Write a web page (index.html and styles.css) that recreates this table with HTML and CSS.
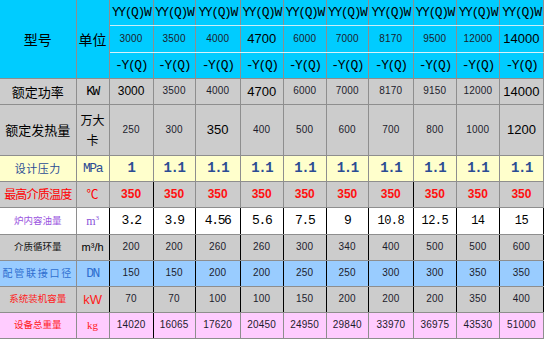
FILE: index.html
```html
<!DOCTYPE html>
<html lang="zh">
<head>
<meta charset="utf-8">
<title>型号参数表</title>
<link rel="stylesheet" href="styles.css">
</head>
<body>
<table class="spec">
<colgroup>
<col class="c-name"><col class="c-unit">
<col class="c44"><col class="c42"><col class="c45"><col class="c43"><col class="c43"><col class="c42"><col class="c45"><col class="c43"><col class="c43"><col class="c44">
</colgroup>
<tbody>
<tr class="h1 hd">
<td rowspan="3" class="lab lab-big">型号</td>
<td rowspan="3" class="lab lab-big">单位</td>
<td class="mono">YY(Q)W</td><td class="mono">YY(Q)W</td><td class="mono">YY(Q)W</td><td class="mono">YY(Q)W</td><td class="mono">YY(Q)W</td><td class="mono">YY(Q)W</td><td class="mono">YY(Q)W</td><td class="mono">YY(Q)W</td><td class="mono">YY(Q)W</td><td class="mono">YY(Q)W</td>
</tr>
<tr class="h2 hd">
<td class="sm">3000</td><td class="sm">3500</td><td class="sm">4000</td><td class="lg">4700</td><td class="sm">6000</td><td class="sm">7000</td><td class="sm">8170</td><td class="sm">9500</td><td class="sm">12000</td><td class="lg">14000</td>
</tr>
<tr class="h3 hd">
<td class="mono">-Y(Q)</td><td class="mono">-Y(Q)</td><td class="mono">-Y(Q)</td><td class="mono">-Y(Q)</td><td class="mono">-Y(Q)</td><td class="mono">-Y(Q)</td><td class="mono">-Y(Q)</td><td class="mono">-Y(Q)</td><td class="mono">-Y(Q)</td><td class="mono">-Y(Q)</td>
</tr>
<tr class="r26 gray">
<td class="lab">额定功率</td><td class="mono">KW</td>
<td class="md">3000</td><td class="sm">3500</td><td class="sm">4000</td><td class="lg">4700</td><td class="sm">6000</td><td class="sm">7000</td><td class="sm">8170</td><td class="sm">9150</td><td class="sm">12000</td><td class="lg">14000</td>
</tr>
<tr class="r51 gray">
<td class="lab">额定发热量</td><td class="unit-stack"><span>万大</span><span>卡</span></td>
<td class="sm">250</td><td class="sm">300</td><td class="lg">350</td><td class="sm">400</td><td class="sm">500</td><td class="sm">600</td><td class="sm">700</td><td class="sm">800</td><td class="sm">1000</td><td class="lg">1200</td>
</tr>
<tr class="r26 yellow">
<td class="lab-blue">设计压力</td><td class="mono blue">MPa</td>
<td class="press">1</td><td class="press">1.1</td><td class="press">1.1</td><td class="press">1.1</td><td class="press">1.1</td><td class="press">1.1</td><td class="press">1.1</td><td class="press">1.1</td><td class="press">1.1</td><td class="press">1.1</td>
</tr>
<tr class="r26 gray">
<td class="lab-red">最高介质温度</td><td class="deg">℃</td>
<td class="temp bk">350</td><td class="temp">350</td><td class="temp">350</td><td class="temp">350</td><td class="temp">350</td><td class="temp">350</td><td class="temp bk">350</td><td class="temp">350</td><td class="temp">350</td><td class="temp">350</td>
</tr>
<tr class="r27 white blk">
<td class="lab-purple">炉内容油量</td><td class="unit-purple">m<sup>3</sup></td>
<td class="mono">3.2</td><td class="mono">3.9</td><td class="mono">4.56</td><td class="mono">5.6</td><td class="mono">7.5</td><td class="mono">9</td><td class="mono-sm">10.8</td><td class="mono-sm">12.5</td><td class="mono-sm">14</td><td class="mono-sm">15</td>
</tr>
<tr class="r26 gray blk">
<td class="lab-small">介质循环量</td><td class="unit-sans">m³/h</td>
<td class="sm">200</td><td class="sm">200</td><td class="sm">260</td><td class="sm">260</td><td class="sm">300</td><td class="sm">340</td><td class="sm">400</td><td class="sm">500</td><td class="sm">500</td><td class="sm">600</td>
</tr>
<tr class="r26 lblue blk">
<td class="lab-pipe">配管联接口径</td><td class="mono blue2">DN</td>
<td class="sm">150</td><td class="sm">150</td><td class="sm">200</td><td class="sm">200</td><td class="sm">250</td><td class="sm">250</td><td class="sm">300</td><td class="sm">300</td><td class="sm">350</td><td class="sm">350</td>
</tr>
<tr class="r26 gray blk">
<td class="lab-redsm">系统装机容量</td><td class="unit-kw">kW</td>
<td class="sm">70</td><td class="sm">70</td><td class="sm">100</td><td class="sm">100</td><td class="sm">150</td><td class="sm">200</td><td class="sm">200</td><td class="sm">200</td><td class="sm">350</td><td class="sm">400</td>
</tr>
<tr class="r26 pink">
<td class="lab-redsm">设备总重量</td><td class="unit-kg">kg</td>
<td class="sm bk">14020</td><td class="sm">16065</td><td class="sm">17620</td><td class="sm">20450</td><td class="sm">24950</td><td class="sm">29840</td><td class="sm">33970</td><td class="sm">36975</td><td class="sm">43530</td><td class="sm">51000</td>
</tr>
</tbody>
</table>
</body>
</html>
```
FILE: styles.css
```css
html, body {
  margin: 0;
  padding: 0;
  background: #ffffff;
}

.spec {
  border-collapse: collapse;
  table-layout: fixed;
  width: 544px;
  font-family: "Liberation Sans", "Noto Sans CJK SC", sans-serif;
  color: #111;
}

.c-name { width: 76px; }
.c-unit { width: 33px; }
.c44 { width: 44px; }
.c42 { width: 42px; }
.c45 { width: 45px; }
.c43 { width: 43px; }

.spec td {
  padding: 0;
  text-align: center;
  vertical-align: middle;
  white-space: nowrap;
  overflow: hidden;
  border: 1px solid #8e8e8e;
  line-height: 1;
}

.spec tr:first-child td { border-top: none; }
.spec td:first-child { border-left: none; }

.h1 { height: 25px; }
.h2 { height: 27px; }
.h3 { height: 26px; }
.r26 { height: 26px; }
.r27 { height: 27px; }
.r51 { height: 51px; }

.hd td { background: #00ccff; }
.h1 td:not(.lab) { border-bottom-color: #c8eef8; }
.h2 td { border-bottom-color: #d8f2fa; }

.gray td { background: #cccccc; }
.yellow td { background: #ffffcc; }
.white td { background: #ffffff; }
.lblue td { background: #99ccff; }
.pink td { background: #ffccff; }

.blk td:not(:first-child) { border-right-color: #000; }
.bk { border-right-color: #000 !important; }

.lab {
  font-family: "Noto Sans CJK SC", sans-serif;
  font-size: 13px;
  color: #000;
}

.lab-big { font-size: 14px; }

.mono {
  font-family: "Liberation Mono", "Noto Sans CJK SC", monospace;
  font-size: 13px;
  letter-spacing: -1.4px;
  color: #000;
}

.mono-sm {
  font-family: "Liberation Mono", monospace;
  font-size: 12px;
  letter-spacing: -0.6px;
  color: #000;
}

.sm {
  font-size: 10px;
  letter-spacing: 0.2px;
  color: #1c1c2c;
}

.md {
  font-size: 12px;
  color: #000;
}

.lg {
  font-size: 13px;
  color: #000;
}

.blue { color: #2b4c94; }
.blue2 { color: #2f6fd0; }

.unit-stack span {
  display: block;
  font-family: "Noto Sans CJK SC", sans-serif;
  font-size: 12px;
  color: #000;
}
.unit-stack span + span { margin-top: 8px; }

.lab-blue {
  font-family: "Noto Sans CJK SC", sans-serif;
  font-size: 11px;
  letter-spacing: 0.5px;
  color: #2b4c94;
}

.press {
  font-family: "Liberation Mono", monospace;
  font-weight: bold;
  font-size: 14px;
  letter-spacing: -1.4px;
  color: #2b4c94;
}

.lab-red {
  font-family: "Noto Sans CJK SC", sans-serif;
  font-size: 12px;
  letter-spacing: -0.8px;
  color: #ff0000;
}

.deg {
  font-family: "Noto Sans CJK SC", sans-serif;
  font-size: 12px;
  color: #ff0000;
}

.temp {
  font-weight: bold;
  font-size: 12px;
  color: #ff1010;
}

.lab-purple {
  font-family: "Noto Sans CJK SC", sans-serif;
  font-size: 9.5px;
  color: #9a55e0;
}

.unit-purple {
  font-family: "Liberation Serif", serif;
  font-size: 12px;
  color: #8a4fd8;
}
.unit-purple sup { font-size: 7px; vertical-align: 5px; }

.lab-small {
  font-family: "Noto Sans CJK SC", sans-serif;
  font-size: 9.5px;
  color: #111;
}

.unit-sans {
  font-size: 11px;
  color: #000;
}

.lab-pipe {
  font-family: "Noto Sans CJK SC", sans-serif;
  font-size: 10px;
  letter-spacing: 1.8px;
  color: #2f6fd0;
}

.lab-redsm {
  font-family: "Noto Sans CJK SC", sans-serif;
  font-size: 9.5px;
  color: #ff1a1a;
}

.unit-kw {
  font-size: 13px;
  color: #ff1a1a;
}

.unit-kg {
  font-family: "Liberation Serif", serif;
  font-size: 11px;
  color: #ff1a1a;
}
```
